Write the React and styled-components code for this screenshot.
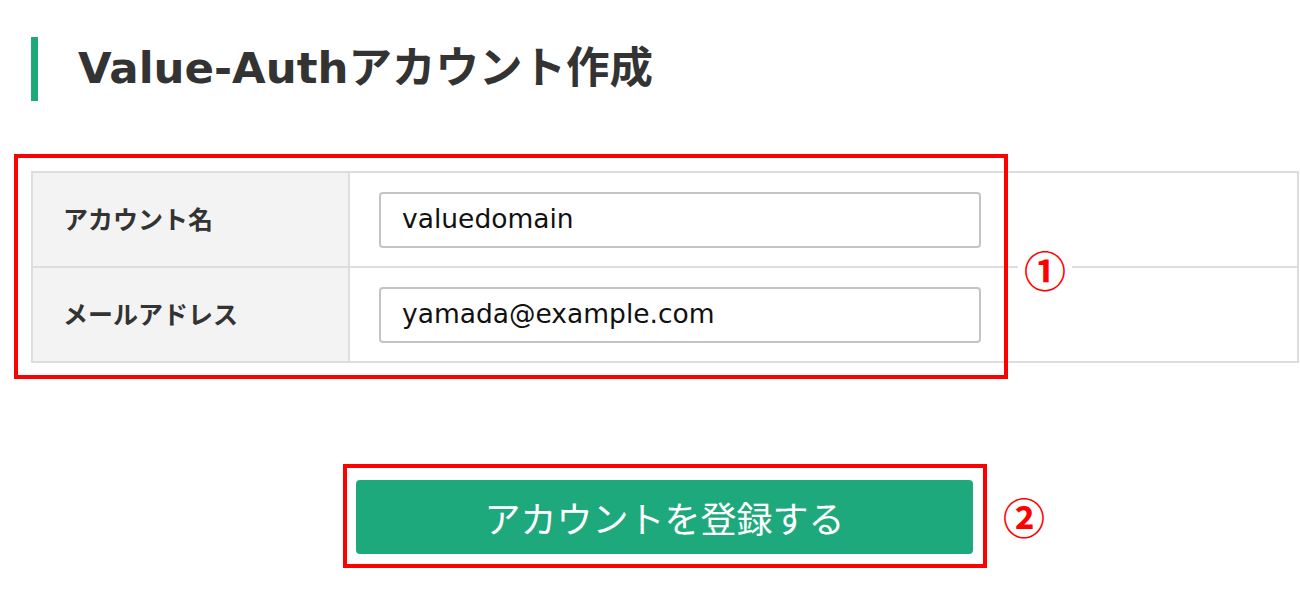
import React from "react";
import styled, { createGlobalStyle } from "styled-components";

const GlobalStyle = createGlobalStyle`
  html, body { margin: 0; padding: 0; background: #fff; }
  body { font-family: "Noto Sans CJK JP", "Noto Sans", sans-serif; color: #333; }
`;

const Page = styled.div`
  width: 1300px;
  padding: 37px 1px 0 31px;
  box-sizing: border-box;
`;

const Heading = styled.h1`
  margin: 0;
  height: 64px;
  box-sizing: border-box;
  border-left: 7px solid #1ea97c;
  padding: 0 0 0 40px;
  font-family: "DejaVu Sans", "Noto Sans CJK JP", sans-serif;
  font-weight: 700;
  font-size: 43.5px;
  line-height: 62px;
  color: #333;
  white-space: nowrap;
`;

const FormArea = styled.div`
  position: relative;
  margin-top: 70px;
`;

const Table = styled.div`
  display: grid;
  grid-template-columns: 317px 1fr;
  grid-auto-rows: 95px;
  border: 2px solid #ddd;
  border-bottom: none;
`;

const LabelCell = styled.div`
  display: flex;
  align-items: center;
  padding: 0 0 4px 30px;
  background: #f3f3f3;
  border-right: 2px solid #ddd;
  border-bottom: 2px solid #ddd;
  font-family: "Noto Sans CJK JP", sans-serif;
  font-weight: 700;
  font-size: 25px;
  color: #333;
`;

const FieldCell = styled.div`
  display: flex;
  align-items: center;
  padding-left: 29px;
  border-bottom: 2px solid #ddd;
`;

const TextInput = styled.input`
  width: 602px;
  height: 56px;
  box-sizing: border-box;
  border: 2px solid #c4c4c4;
  border-radius: 4px;
  padding: 0 0 2px 21px;
  font-family: "DejaVu Sans", Verdana, sans-serif;
  font-size: 26.5px;
  color: #111;
  background: #fff;
  outline: none;
`;

const AnnotFrame = styled.div`
  position: absolute;
  left: -17px;
  top: -17px;
  width: 994px;
  height: 225px;
  box-sizing: border-box;
  border: 4px solid #f00;
  pointer-events: none;
`;

const Marker = styled.span`
  position: absolute;
  left: ${(p) => p.$left}px;
  top: ${(p) => p.$top}px;
  transform: translateY(-50%);
  padding: 0 6px;
  background: #fff;
  font-family: "Noto Sans CJK JP", sans-serif;
  font-weight: 700;
  font-size: 42px;
  line-height: 44px;
  color: #f00;
`;

const ButtonRow = styled.div`
  display: flex;
  justify-content: center;
  margin-top: 101px;
`;

const ButtonFrame = styled.div`
  position: relative;
  border: 4px solid #f00;
  padding: 12px 10px 10px 9px;
`;

const SubmitButton = styled.button`
  display: block;
  width: 617px;
  height: 74px;
  border: none;
  border-radius: 4px;
  background: #1ea97c;
  color: #fff;
  font-family: "Noto Sans CJK JP", sans-serif;
  font-weight: 400;
  font-size: 36px;
  line-height: 74px;
  padding: 0;
  cursor: pointer;
`;

const SideMarker = styled.span`
  position: absolute;
  left: calc(100% + 20px);
  top: 50%;
  transform: translateY(-50%);
  font-family: "Noto Sans CJK JP", sans-serif;
  font-weight: 700;
  font-size: 42px;
  line-height: 44px;
  color: #f00;
`;

const rows = [
  { label: "アカウント名", value: "valuedomain" },
  { label: "メールアドレス", value: "yamada@example.com" },
];

export default function App() {
  return (
    <>
      <GlobalStyle />
      <Page>
        <Heading>Value-Authアカウント作成</Heading>
        <FormArea>
          <Table>
            {rows.map((r) => (
              <React.Fragment key={r.label}>
                <LabelCell>{r.label}</LabelCell>
                <FieldCell>
                  <TextInput defaultValue={r.value} />
                </FieldCell>
              </React.Fragment>
            ))}
          </Table>
          <AnnotFrame />
          <Marker $left={987} $top={98}>①</Marker>
        </FormArea>
        <ButtonRow>
          <ButtonFrame>
            <SubmitButton type="button">アカウントを登録する</SubmitButton>
            <SideMarker>②</SideMarker>
          </ButtonFrame>
        </ButtonRow>
      </Page>
    </>
  );
}
